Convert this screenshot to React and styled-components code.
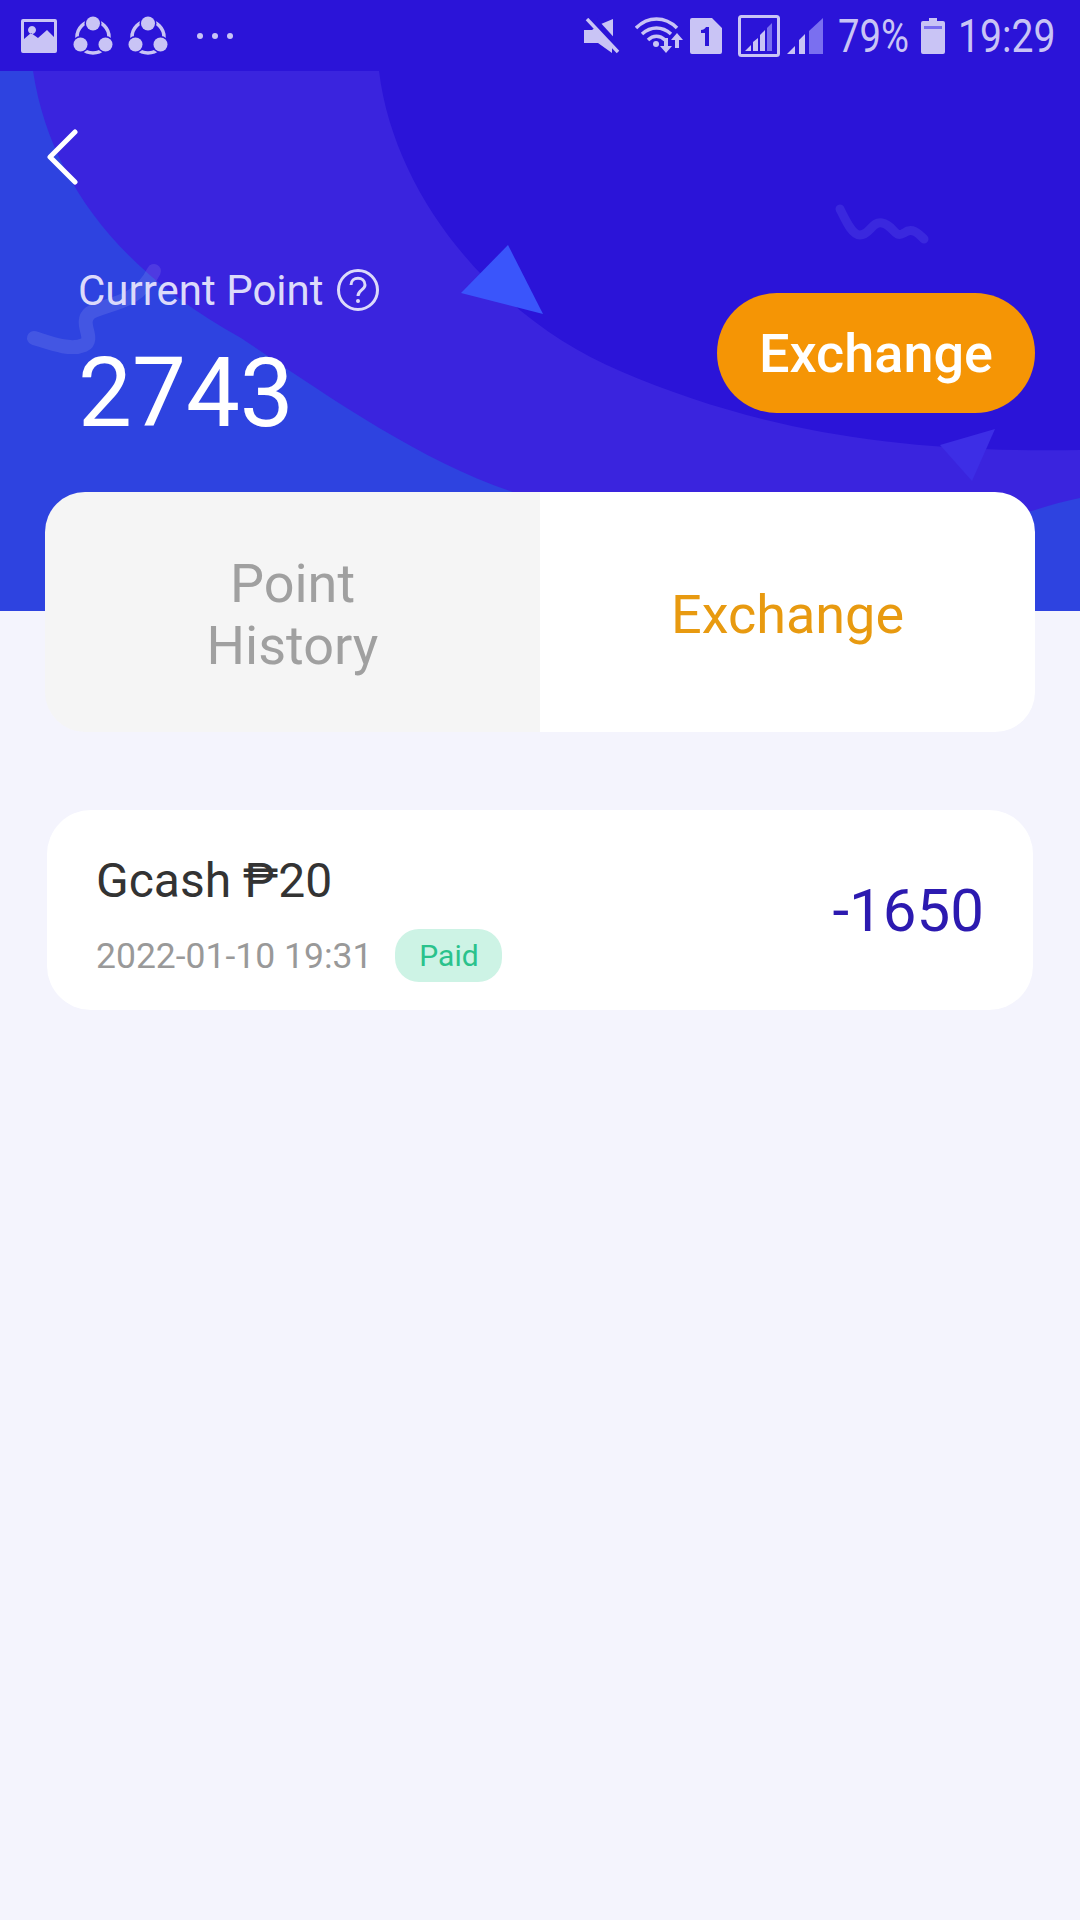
import React from 'react';
import styled, { createGlobalStyle } from 'styled-components';

const GlobalStyle = createGlobalStyle`
  html, body {
    margin: 0;
    padding: 0;
    background: #f4f4fd;
    font-family: Roboto, "Liberation Sans", sans-serif;
  }
  * { box-sizing: border-box; }
`;

const Page = styled.div`
  width: 1080px;
  height: 1920px;
  background: #f4f4fd;
  overflow: hidden;
`;

const StatusBar = styled.div`
  height: 71px;
  display: flex;
  align-items: center;
  justify-content: space-between;
  padding: 0 24px 0 21px;
  background: #2b14d8;
  color: #c9c4f5;
`;

const StatusGroup = styled.div`
  display: flex;
  align-items: center;
`;

const StatusIcon = styled.svg`
  display: block;
  flex: none;
  margin-left: ${p => p.$gap || 0}px;
  fill: #c9c4f5;
`;

const StatusText = styled.span`
  display: block;
  flex: none;
  width: ${p => p.$width}px;
  margin-left: ${p => p.$gap || 0}px;
  font-size: 46px;
  line-height: 50px;
  white-space: nowrap;
  transform: scaleX(${p => p.$squeeze});
  transform-origin: left center;
`;

const Hero = styled.div`
  position: relative;
  height: 540px;
  background: #2e43e0;
  overflow: hidden;
`;

const HeroArt = styled.svg`
  position: absolute;
  left: 0;
  top: 0;
`;

const HeroContent = styled.div`
  position: relative;
  padding: 0 45px 0 78px;
`;

const BackButton = styled.svg`
  display: block;
  margin: 58px 0 0 -32px;
`;

const HeroRow = styled.div`
  display: flex;
  justify-content: space-between;
  align-items: flex-start;
  margin-top: 81px;
`;

const PointLabel = styled.div`
  display: flex;
  align-items: center;
  gap: 12px;
  height: 48px;
  font-size: 42px;
  color: #dcdafa;
`;

const PointValue = styled.div`
  margin-top: 29px;
  font-size: 96px;
  line-height: 100px;
  color: #fff;
`;

const ExchangeButton = styled.button`
  width: 318px;
  height: 120px;
  margin-top: 27px;
  border: 0;
  border-radius: 60px;
  background: #f59505;
  color: #fff;
  font-family: inherit;
  font-size: 54px;
  font-weight: 500;
`;

const Tabs = styled.div`
  position: relative;
  display: flex;
  width: 990px;
  height: 240px;
  margin: -119px 0 0 45px;
  border-radius: 40px;
  overflow: hidden;
`;

const Tab = styled.div`
  flex: 1;
  display: flex;
  align-items: center;
  justify-content: center;
  padding-top: 6px;
  text-align: center;
  font-size: 54px;
  line-height: 62px;
  background: ${p => (p.$active ? '#fff' : '#f5f5f5')};
  color: ${p => (p.$active ? '#e89a10' : '#a0a0a0')};
`;

const Card = styled.div`
  display: flex;
  align-items: center;
  justify-content: space-between;
  width: 986px;
  height: 200px;
  margin: 78px 0 0 47px;
  padding: 0 49px;
  border-radius: 44px;
  background: #fff;
`;

const CardBody = styled.div`
  padding-top: 15px;
`;

const CardTitle = styled.div`
  font-size: 48px;
  line-height: 56px;
  color: #333;
`;

const CardMeta = styled.div`
  display: flex;
  align-items: center;
  gap: 23px;
  margin-top: 20px;
`;

const CardDate = styled.span`
  font-size: 35.500px;
  color: #999;
`;

const PaidBadge = styled.span`
  display: flex;
  align-items: center;
  justify-content: center;
  width: 107px;
  height: 53px;
  border-radius: 24px;
  background: #cdf3e5;
  color: #2ac28c;
  font-size: 30px;
`;

const Amount = styled.div`
  font-size: 60px;
  color: #2c1ab0;
`;

const ShareIcon = ({ gap }) => (
  <StatusIcon $gap={gap} width="40" height="40" viewBox="0 0 40 40">
    <circle cx="20" cy="21" r="16" fill="none" stroke="#c9c4f5" strokeWidth="3.500" />
    <circle cx="20" cy="7.500" r="8.500" fill="#2b14d8" />
    <circle cx="7.500" cy="28.500" r="8.500" fill="#2b14d8" />
    <circle cx="32.500" cy="28.500" r="8.500" fill="#2b14d8" />
    <circle cx="20" cy="7.500" r="7" />
    <circle cx="7.500" cy="28.500" r="7" />
    <circle cx="32.500" cy="28.500" r="7" />
  </StatusIcon>
);

export default function App() {
  return (
    <Page>
      <GlobalStyle />
      <StatusBar>
        <StatusGroup>
          <StatusIcon width="36" height="34" viewBox="0 0 36 34">
            <path fillRule="evenodd" d="M2 0h32a2 2 0 0 1 2 2v30a2 2 0 0 1-2 2H2a2 2 0 0 1-2-2V2a2 2 0 0 1 2-2zM3 3v17l7-6 7 5 9-8 7 7V3zM11 7a4 4 0 1 0 .01 0z" />
          </StatusIcon>
          <ShareIcon gap={16} />
          <ShareIcon gap={15} />
          <StatusIcon $gap={29} width="36" height="6" viewBox="0 0 36 6">
            <circle cx="3" cy="3" r="3" />
            <circle cx="18" cy="3" r="3" />
            <circle cx="33" cy="3" r="3" />
          </StatusIcon>
        </StatusGroup>
        <StatusGroup>
          <StatusIcon width="36" height="36" viewBox="0 0 36 36">
            <path d="M0 12h8l4-3 18 20-2 1v5L14 25H0zM17 6l12-5v20L17 11z" />
            <path d="M5 0l31 34" stroke="#2b14d8" strokeWidth="5" transform="translate(2 -2)" />
            <path d="M3 1l31 33" stroke="#c9c4f5" strokeWidth="3.500" />
          </StatusIcon>
          <StatusIcon $gap={15} width="50" height="38" viewBox="0 0 50 38">
            <path d="M1 11C13-1 30-1 42 11M7 17c9-8 20-8 29 0M13 23c5-5 12-5 17 0" fill="none" stroke="#c9c4f5" strokeWidth="3.500" />
            <circle cx="21" cy="27" r="3" />
            <path d="M29 21h4v8h4l-6 7-6-7h4zM42 16l6 7h-4v8h-4v-8h-4z" />
          </StatusIcon>
          <StatusIcon $gap={5} width="32" height="36" viewBox="0 0 32 36">
            <path fillRule="evenodd" d="M2 0h20l10 10v24a2 2 0 0 1-2 2H2a2 2 0 0 1-2-2V2a2 2 0 0 1 2-2zM11 12v3h4v13h4V9h-3c-1 2-3 3-5 3z" />
          </StatusIcon>
          <StatusIcon $gap={16} width="42" height="42" viewBox="0 0 42 42">
            <rect x="1.500" y="1.500" width="39" height="39" rx="2" fill="none" stroke="#c9c4f5" strokeWidth="3" />
            <path d="M7 36l6-6v6zM15 36V27l5-4v13zM22 36V20l5-5v21z" />
            <path d="M29 36V13l5-5v28z" fill="#7a6ff0" />
          </StatusIcon>
          <StatusIcon $gap={7} width="36" height="36" viewBox="0 0 36 36">
            <path d="M0 36l8-8v8zM12 36V22l6-6v20z" />
            <path d="M22 36V13L36 0v36z" fill="#7a6ff0" />
          </StatusIcon>
          <StatusText $gap={15} $width={70} $squeeze={0.83}>79%</StatusText>
          <StatusIcon $gap={13} width="24" height="36" viewBox="0 0 24 36">
            <path d="M2 3h6V0h8v3h6a2 2 0 0 1 2 2v29a2 2 0 0 1-2 2H2a2 2 0 0 1-2-2V5a2 2 0 0 1 2-2z" />
            <rect x="3" y="8" width="18" height="3" fill="#7a6ff0" />
          </StatusIcon>
          <StatusText $gap={13} $width={98} $squeeze={0.85}>19:29</StatusText>
        </StatusGroup>
      </StatusBar>

      <Hero>
        <HeroArt width="1080" height="540" viewBox="0 0 1080 540">
          <path d="M33 0C50 110 120 200 241 267C320 320 420 390 510 420C700 490 900 480 1035 439C1050 434 1065 430 1080 427V0Z" fill="#3a24de" />
          <path d="M379 0C395 130 500 250 620 300C760 360 900 382 1080 379V0Z" fill="#2b14d8" />
          <path d="M508 174L461 222L543 243Z" fill="#3a55fb" />
          <path d="M995 358L940 374L972 410Z" fill="#3d2ee6" />
          <path d="M840 138C846 150 852 164 860 164C870 164 872 150 882 152C894 154 894 168 904 162C912 156 918 162 924 168" fill="none" stroke="#3a28de" strokeWidth="9" strokeLinecap="round" strokeLinejoin="round" />
          <path d="M34 267C50 272 70 280 84 274C96 268 78 252 90 242C104 232 136 236 154 200" fill="none" stroke="#fff" strokeOpacity="0.1" strokeWidth="14" strokeLinecap="round" strokeLinejoin="round" />
        </HeroArt>
        <HeroContent>
          <BackButton width="32" height="56" viewBox="0 0 32 56">
            <path d="M29 3L4 28l25 25" fill="none" stroke="#fff" strokeWidth="5" strokeLinecap="round" strokeLinejoin="round" />
          </BackButton>
          <HeroRow>
            <div>
              <PointLabel>
                Current Point
                <svg width="44" height="44" viewBox="0 0 44 44">
                  <circle cx="22" cy="22" r="19.500" fill="none" stroke="#dcdafa" strokeWidth="3" />
                  <path d="M15 17c0-9 14-9 14 0 0 5-7 5-7 11" fill="none" stroke="#dcdafa" strokeWidth="3" />
                  <circle cx="22" cy="33" r="2" fill="#dcdafa" />
                </svg>
              </PointLabel>
              <PointValue>2743</PointValue>
            </div>
            <ExchangeButton>Exchange</ExchangeButton>
          </HeroRow>
        </HeroContent>
      </Hero>

      <Tabs>
        <Tab>Point<br />History</Tab>
        <Tab $active>Exchange</Tab>
      </Tabs>

      <Card>
        <CardBody>
          <CardTitle>Gcash ₱20</CardTitle>
          <CardMeta>
            <CardDate>2022-01-10 19:31</CardDate>
            <PaidBadge>Paid</PaidBadge>
          </CardMeta>
        </CardBody>
        <Amount>-1650</Amount>
      </Card>
    </Page>
  );
}
